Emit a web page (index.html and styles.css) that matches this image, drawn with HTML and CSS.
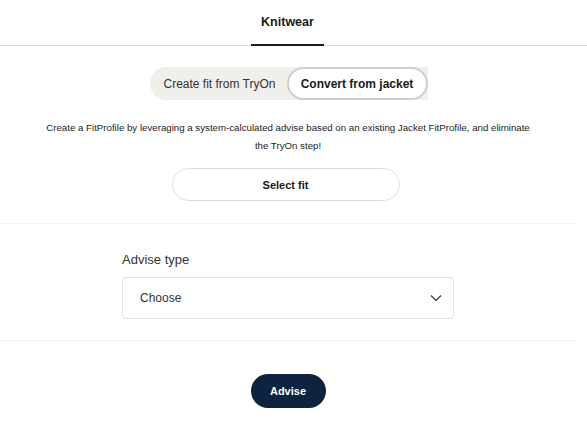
FILE: index.html
```html
<!DOCTYPE html>
<html>
<head>
<meta charset="utf-8">
<link rel="stylesheet" href="styles.css">
</head>
<body>
<div class="tabs">
  <div class="tab active">Knitwear</div>
</div>
<main class="page">
<section class="top">
  <div class="segmented">
    <button class="seg">Create fit from TryOn</button>
    <button class="seg selected">Convert from jacket</button>
  </div>
  <p class="desc">Create a FitProfile by leveraging a system-calculated advise based on an existing Jacket FitProfile, and eliminate the TryOn step!</p>
  <button class="select-fit">Select fit</button>
</section>
<section class="form">
  <label class="label">Advise type</label>
  <div class="select">
    <span>Choose</span>
    <svg width="12" height="8" viewBox="0 0 12 8"><path d="M1 1.5 L6 6.5 L11 1.5" fill="none" stroke="#444" stroke-width="1.3"/></svg>
  </div>
</section>
<div class="actions">
  <button class="advise">Advise</button>
</div>
</main>
</body>
</html>
```
FILE: styles.css
```css
* { box-sizing: border-box; }
body {
  margin: 0;
  background: #fff;
  font-family: "Liberation Sans", Arial, sans-serif;
  color: #222;
  width: 587px;
  height: 423px;
  overflow: hidden;
}
button { font-family: inherit; cursor: pointer; }
.tabs {
  display: flex;
  justify-content: center;
  border-bottom: 1px solid #dcdcdc;
  height: 46px;
  padding-right: 12px;
}
.tab {
  width: 73px;
  text-align: center;
  font-weight: bold;
  font-size: 12.5px;
  padding-top: 15px;
  color: #1a1a1a;
}
.tab.active { border-bottom: 2px solid #1b1b1b; margin-bottom: -1px; }
.page { width: 576px; }
.top {
  display: flex;
  flex-direction: column;
  align-items: center;
  padding-top: 21px;
  padding-bottom: 22px;
  border-bottom: 1px solid #f3f3f3;
}
.segmented {
  display: flex;
  background: #f1efea;
  border-radius: 17px 0 0 17px;
  height: 33px;
  margin-left: 2px;
}
.seg {
  border: none;
  background: transparent;
  font-size: 12px;
  color: #333;
  padding: 0 13px;
  height: 33px;
}
.seg.selected {
  background: #fff;
  border: 2px solid #cfcfcf;
  border-radius: 17px;
  font-weight: bold;
  color: #1a1a1a;
  width: 141px;
  padding: 0;
  margin-left: -2px;
}
.desc {
  font-size: 9.7px;
  line-height: 18px;
  text-align: center;
  width: 488px;
  margin: 19px 0 0 0;
  color: #222;
}
.select-fit {
  margin-top: 13px;
  margin-right: 5px;
  width: 228px;
  height: 33px;
  background: #fff;
  border: 1px solid #dcdde3;
  border-radius: 17px;
  font-weight: bold;
  font-size: 11px;
  color: #1a1a1a;
}
.form {
  padding: 28px 0 21px 122px;
  border-bottom: 1px solid #f3f3f3;
  display: flex;
  flex-direction: column;
}
.label {
  font-size: 13px;
  color: #333;
  margin-bottom: 10px;
}
.select {
  width: 332px;
  height: 42px;
  border: 1px solid #e2e2e2;
  border-radius: 4px;
  display: flex;
  align-items: center;
  justify-content: space-between;
  padding: 0 11px 0 17px;
  font-size: 12px;
  color: #333;
}
.actions {
  display: flex;
  justify-content: center;
  padding-top: 33px;
}
.advise {
  width: 75px;
  height: 34px;
  border: none;
  border-radius: 17px;
  background: #0d2340;
  color: #fff;
  font-weight: bold;
  font-size: 11px;
}
```
